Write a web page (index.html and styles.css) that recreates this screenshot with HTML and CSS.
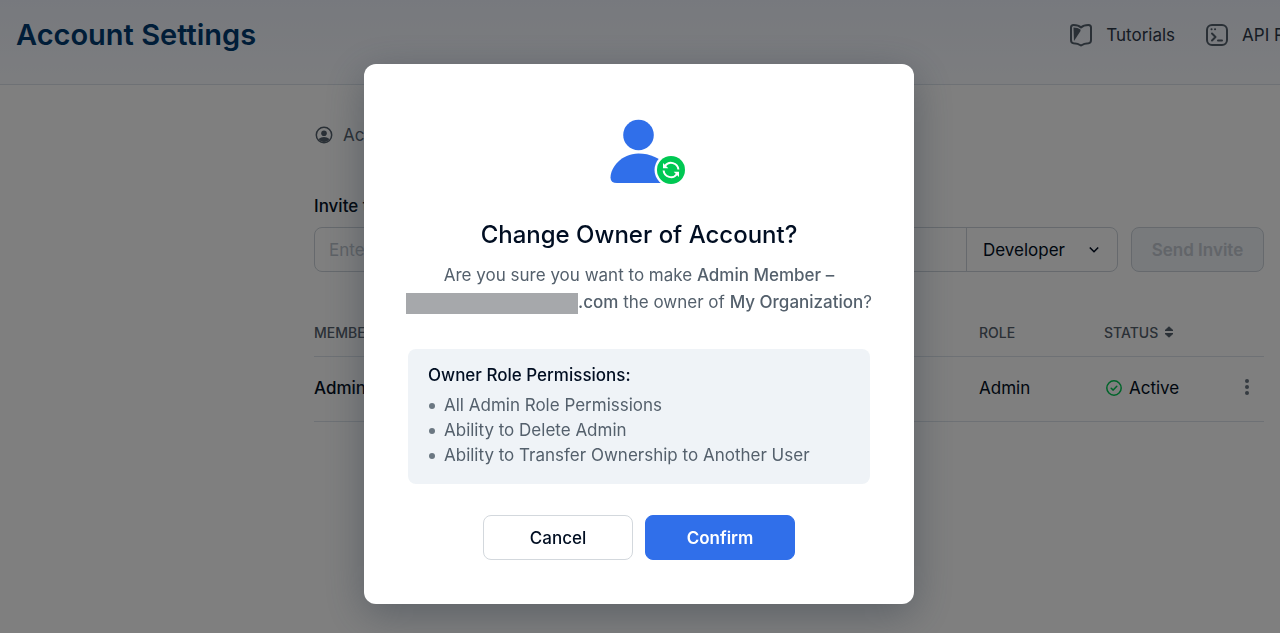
FILE: index.html
```html
<!DOCTYPE html>
<html lang="en">
<head>
    <meta charset="UTF-8">
    <title>Account Settings</title>
    <meta name="viewport" content="width=device-width, initial-scale=1.0">
    <link rel="stylesheet" href="styles.css">
</head>
<body>
<div class="page">
    <header class="header">
        <h1>Account Settings</h1>
        <nav class="nav">
            <a href="#">
                <svg width="24" height="24" viewBox="0 0 24 24" fill="none" stroke="#54606c" stroke-width="2" stroke-linejoin="round">
                    <path d="M12 4.500C10 2.500 7 2 4.500 2Q2 2 2 4.500V17Q2 20 4.500 20.300Q9 20.500 12 22.500Q15 20.500 19.500 20.300Q22 20 22 17V4.500Q22 2 19.500 2C17 2 14 2.500 12 4.500Z"/>
                    <path d="M4.500 4.500Q9 4.500 11.500 6.500V8L5 18Z" fill="#54606c" stroke="none"/>
                </svg>
                Tutorials
            </a>
            <a href="#">
                <svg width="24" height="24" viewBox="0 0 24 24" fill="none" stroke="#54606c" stroke-width="2" stroke-linecap="round" stroke-linejoin="round">
                    <rect x="2" y="2" width="20" height="20" rx="5"/>
                    <path d="M7 10.500L10.500 14L7 17.500M13 17.500H17"/>
                    <path d="M6.500 6.200H6.600M10 6.200H10.100"/>
                </svg>
                API Reference
            </a>
        </nav>
    </header>

    <main class="content">
        <div class="tabs">
            <a href="#" class="tab">
                <svg width="18" height="18" viewBox="0 0 18 18">
                    <circle cx="9" cy="9" r="7.700" fill="none" stroke="#54606c" stroke-width="1.500"/>
                    <circle cx="9" cy="7.200" r="2.800" fill="#54606c"/>
                    <path d="M3.500 13Q6 11 9 11T14.500 13Q12.500 16 9 16T3.500 13Z" fill="#54606c"/>
                </svg>
                Account
            </a>
        </div>

        <form class="invite">
            <label for="email">Invite to Account</label>
            <div class="invite-row">
                <div class="field">
                    <input type="email" id="email" placeholder="Enter email">
                    <div class="role">
                        <select aria-label="Role">
                            <option>Developer</option>
                            <option>Admin</option>
                        </select>
                        <svg width="10" height="8" viewBox="0 0 10 8" fill="none" stroke="#010e22" stroke-width="1.600"><path d="M.8 1.500L5 5.700L9.200 1.500"/></svg>
                    </div>
                </div>
                <button type="button" class="send" disabled>Send Invite</button>
            </div>
        </form>

        <table class="members">
            <thead>
            <tr>
                <th>MEMBER</th>
                <th class="col-role">ROLE</th>
                <th class="col-status">STATUS
                    <svg width="10" height="12" viewBox="0 0 10 12" fill="#54606c" stroke="#54606c" stroke-linejoin="round"><path d="M5 .8L9 4.500H1ZM5 11.200L9 7.500H1Z"/></svg>
                </th>
                <th class="col-menu"></th>
            </tr>
            </thead>
            <tbody>
            <tr>
                <td class="name">Admin Member</td>
                <td>Admin</td>
                <td>
                    <span class="status">
                        <svg width="16" height="16" viewBox="0 0 16 16" fill="none" stroke="#00c853" stroke-width="1.500" stroke-linecap="round" stroke-linejoin="round"><circle cx="8" cy="8" r="7.200"/><path d="M5.200 8.200L7.200 10.100L10.800 6.300"/></svg>
                        Active
                    </span>
                </td>
                <td>
                    <button type="button" class="more" aria-label="More">
                        <svg width="4" height="18" viewBox="0 0 4 18" fill="#6b7782"><circle cx="2" cy="3" r="2"/><circle cx="2" cy="9" r="2"/><circle cx="2" cy="15" r="2"/></svg>
                    </button>
                </td>
            </tr>
            </tbody>
        </table>
    </main>
</div>

<div class="overlay">
    <div class="modal" role="dialog" aria-modal="true" aria-labelledby="modal-title">
        <svg class="modal-icon" width="94" height="66" viewBox="0 0 94 66">
            <circle cx="46.500" cy="16" r="15.300" fill="#306fea"/>
            <path d="M46.500 34.500C29 34.500 18.500 49 18.500 58.500Q18.500 64 25 64H75V48C69 39 58 34.500 46.500 34.500Z" fill="#306fea"/>
            <circle cx="79" cy="51" r="16.500" fill="#fff"/>
            <circle cx="79" cy="51" r="14" fill="#00c853"/>
            <g fill="none" stroke="#fff" stroke-width="2">
                <path d="M73 47A7.400 7.400 0 0 1 86.400 50.500"/>
                <path d="M85 55A7.400 7.400 0 0 1 71.600 51.500"/>
            </g>
            <path d="M71 44V49.300H76.300ZM87 58V52.700H81.700Z" fill="#fff"/>
        </svg>
        <h2 id="modal-title">Change Owner of Account?</h2>
        <p class="question">
            Are you sure you want to make <b>Admin Member –</b><br>
            <span class="redacted"></span><b>.com</b> the owner of <b>My Organization</b>?
        </p>
        <div class="permissions">
            <h3>Owner Role Permissions:</h3>
            <ul>
                <li>All Admin Role Permissions</li>
                <li>Ability to Delete Admin</li>
                <li>Ability to Transfer Ownership to Another User</li>
            </ul>
        </div>
        <div class="actions">
            <button type="button" class="btn">Cancel</button>
            <button type="button" class="btn btn-primary">Confirm</button>
        </div>
    </div>
</div>
</body>
</html>
```
FILE: styles.css
```css
* {
    margin: 0;
    padding: 0;
    box-sizing: border-box;
}

body {
    font-family: Inter, "Liberation Sans", sans-serif;
    font-size: 17px;
    color: #010e22;
    background: #fff;
    overflow: hidden;
}

a {
    text-decoration: none;
    color: inherit;
}

ul {
    list-style: none;
}

button, input, select {
    font: inherit;
    color: inherit;
}

/* header */
.header {
    display: flex;
    justify-content: space-between;
    align-items: flex-start;
    /* the nav runs past the right edge */
    width: calc(100% + 92px);
    height: 85px;
    padding: 15px 16px;
    background: linear-gradient(#eff3fc, #f9fbff);
    border-bottom: 1px solid #dce3ea;
}
.header h1 {
    font-size: 29px;
    line-height: 40px;
    font-weight: 600;
    color: #003b70;
}
.nav {
    display: flex;
    gap: 30px;
}
.nav a {
    display: flex;
    align-items: center;
    gap: 13px;
    line-height: 40px;
    color: #2c3848;
    white-space: nowrap;
}

/* content */
.content {
    width: 950px;
    margin: 0 16px 0 auto;
    padding-top: 35px;
}
.tab {
    display: inline-flex;
    align-items: center;
    gap: 10px;
    padding-left: 1px;
    line-height: 30px;
    color: #54606c;
}
.invite label {
    display: block;
    margin-top: 43px;
    line-height: 26px;
    font-weight: 500;
}
.invite-row {
    display: flex;
    gap: 13px;
    margin-top: 8px;
}
.field {
    display: flex;
    flex: 1;
    height: 45px;
    border: 1px solid #ccd3da;
    border-radius: 8px;
}
.field input {
    flex: 1;
    min-width: 0;
    padding: 0 14px;
    border: 0;
    background: none;
    outline: none;
}
.field input::placeholder {
    color: #bcc4cc;
}
.role {
    position: relative;
    width: 151px;
    border-left: 1px solid #ccd3da;
}
.role select {
    width: 100%;
    height: 100%;
    padding: 0 16px;
    border: 0;
    background: none;
    appearance: none;
}
.role svg {
    position: absolute;
    right: 18px;
    top: 18px;
    pointer-events: none;
}
.send {
    width: 133px;
    border: 1px solid #ccd3da;
    border-radius: 8px;
    background: #f0f4f9;
    color: #c4cad2;
    font-weight: 600;
}

/* members table */
.members {
    width: 100%;
    margin-top: 37px;
    border-collapse: collapse;
    table-layout: fixed;
    text-align: left;
}
.members th {
    height: 47px;
    font-size: 14px;
    font-weight: 500;
    color: #54606c;
    border-bottom: 1px solid #dce3ea;
}
.members td {
    height: 65px;
    padding-bottom: 2px;
    border-bottom: 1px solid #dce3ea;
}
.members .name {
    font-weight: 500;
}
.col-role {
    width: 125px;
}
.col-status {
    width: 141px;
}
.col-status svg {
    margin-left: 2px;
}
.col-menu {
    width: 19px;
}
.status {
    display: flex;
    align-items: center;
    gap: 7px;
    padding-left: 2px;
}
.more {
    display: block;
    padding-top: 2px;
    border: 0;
    background: none;
}

/* modal */
.overlay {
    position: fixed;
    inset: 0;
    display: flex;
    justify-content: center;
    align-items: flex-start;
    padding: 64px 2px 0 0;
    background: rgba(0, 0, 0, .5);
}
.modal {
    width: 550px;
    padding: 55px 44px 44px;
    border-radius: 12px;
    background: #fff;
    box-shadow: 0 10px 40px rgba(38, 50, 66, .4);
    text-align: center;
}
.modal-icon {
    display: block;
    margin: 0 auto;
}
.modal h2 {
    margin-top: 30px;
    font-size: 24px;
    line-height: 40px;
    font-weight: 500;
}
.question {
    margin: 7px -8px 0;
    line-height: 27px;
    color: #54606c;
    white-space: nowrap;
}
.question b {
    font-weight: 500;
}
.redacted {
    display: inline-block;
    width: 172px;
    height: 21px;
    background: #a6a8ab;
    vertical-align: middle;
}
.permissions {
    margin-top: 33px;
    padding: 12px 20px 16px;
    border-radius: 8px;
    background: #eff3f7;
    text-align: left;
}
.permissions h3 {
    margin-bottom: 4px;
    font-size: 17px;
    line-height: 28px;
    font-weight: 500;
}
.permissions li {
    display: flex;
    align-items: center;
    gap: 9px;
    line-height: 25px;
    color: #54606c;
}
.permissions li::before {
    content: "";
    width: 6px;
    height: 6px;
    margin-left: 1px;
    border-radius: 50%;
    background: #6b7782;
}
.actions {
    display: flex;
    justify-content: center;
    gap: 12px;
    margin-top: 31px;
}
.btn {
    width: 150px;
    height: 45px;
    border: 1px solid #d3d8dd;
    border-radius: 8px;
    background: #fff;
    font-weight: 500;
}
.btn-primary {
    border-color: #306fea;
    background: #306fea;
    color: #fff;
    font-weight: 600;
}
```
